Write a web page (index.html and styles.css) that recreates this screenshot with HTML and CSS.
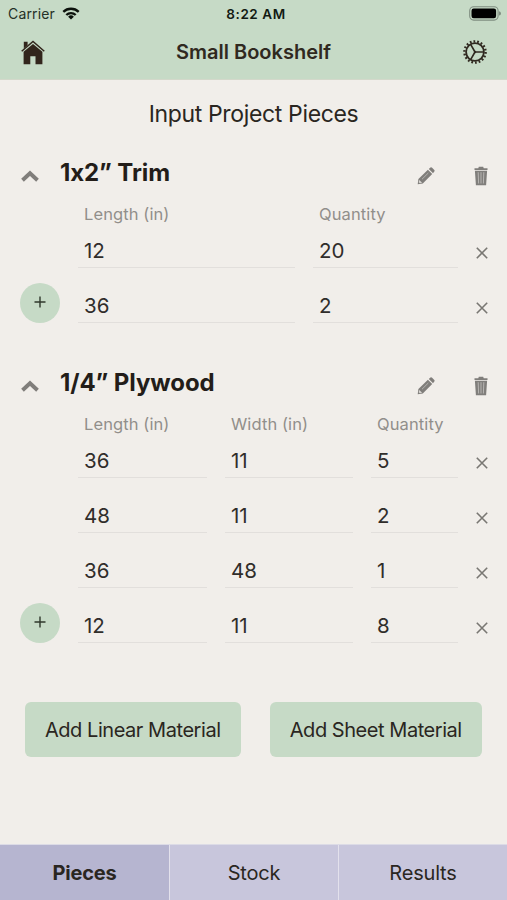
FILE: index.html
```html
<!DOCTYPE html>
<html lang="en">
<head>
<meta charset="utf-8">
<title>Small Bookshelf</title>
<link rel="stylesheet" href="styles.css">
</head>
<body>
<svg class="defs" aria-hidden="true">
  <symbol id="chevron" viewBox="0 0 18 12"><path d="M1.5 10.2 9 3.2l7.5 7" fill="none" stroke="currentColor" stroke-width="3.9"/></symbol>
  <symbol id="pencil" viewBox="0 0 18 18"><path d="M.7 17.3 1.4 12.1 10.9 2.8 15.2 7.1 5.8 16.5ZM11.8 2 13.4.6Q14.3-.1 15.1.7L17.3 2.9Q18 3.8 17.3 4.6L16 6.2Z" fill="currentColor"/><path d="M5 12.2 11.3 6" stroke="#c9c7c4" stroke-width=".7" fill="none"/><path d="m2.3 12.9 2.8 2.8-2.3.6-1.1-1.1Z" fill="#d8d5d2"/></symbol>
  <symbol id="trash" viewBox="0 0 14 20"><path d="M.5 2.2h3.8l.5-1.5h4.4l.5 1.5h3.8v1.9H.5ZM.9 4.7h12.2l-1 14.5H1.9Z" fill="currentColor"/><path d="m4.2 6.2.4 11.3M7 6.2v11.3m2.8-11.3-.4 11.3" stroke="#c4c2bf" stroke-width=".8" fill="none"/></symbol>
  <symbol id="cross" viewBox="0 0 12 12"><path d="m.8.8 10.4 10.4m0-10.4L.8 11.2" stroke="currentColor" stroke-width="1.6"/></symbol>
  <symbol id="plus" viewBox="0 0 12 12"><path d="M6 .5v11M.5 6h11" stroke="currentColor" stroke-width="1.4"/></symbol>
</svg>
<div class="app">
  <header class="top">
    <div class="status">
      <div class="carrier"><span>Carrier</span>
        <svg width="18" height="13" viewBox="0 0 18 13"><g fill="none" stroke="#0c110c" stroke-width="2.3"><path d="M1.3 4.9a11 11 0 0 1 15.4 0"/><path d="M4.3 8a6.7 6.7 0 0 1 9.4 0"/></g><path d="M9 12.6 6.1 9.8a4.1 4.1 0 0 1 5.8 0Z" fill="#0c110c"/></svg>
      </div>
      <div class="clock">8:22 AM</div>
      <svg class="battery" width="32" height="15" viewBox="0 0 32 15"><rect x=".7" y=".7" width="28.4" height="13.4" rx="4" fill="none" stroke="#7f8d80" stroke-width="1.1"/><rect x="2.5" y="2.5" width="24.6" height="9.8" rx="2.2" fill="#000"/><path d="M30 5.2q2 .5 2 2.2t-2 2.2Z" fill="#7f8d80"/></svg>
    </div>
    <nav class="bar">
      <svg width="24" height="25" viewBox="0 0 24 25"><path d="M2.8 1.8h3.8v3.5L2.8 8.4Z" fill="#32251c"/><path d="M.7 11.2 12 1.5l11.3 9.7" fill="none" stroke="#32251c" stroke-width="1.5"/><path d="M2.6 11.8 12 3.9l9.4 7.9V24.2h-6.9v-8H9.3v8H2.6Z" fill="#32251c"/></svg>
      <h1>Small Bookshelf</h1>
      <svg width="26" height="26" viewBox="-13 -13 26 26" fill="none" stroke="#302920"><circle r="8.9" stroke-width="1.8"/><circle r="10.6" stroke-width="2.4" stroke-dasharray="1.75 1.95"/><path d="M0 0h9M0 0l-4.5-7.8M0 0l-4.5 7.8" stroke-width="1.6"/><circle r="1.2" fill="#302920" stroke="none"/></svg>
    </nav>
  </header>
  <main>
    <h2>Input Project Pieces</h2>
    <section class="material">
      <div class="heading"><svg class="chev"><use href="#chevron"/></svg><h3>1x2” Trim</h3><svg class="pencil"><use href="#pencil"/></svg><svg class="trash"><use href="#trash"/></svg></div>
      <div class="row linear labels"><i></i><span>Length (in)</span><span>Quantity</span></div>
      <div class="row linear"><i></i><b>12</b><b>20</b><svg class="x"><use href="#cross"/></svg></div>
      <div class="row linear"><div class="add"><svg><use href="#plus"/></svg></div><b>36</b><b>2</b><svg class="x"><use href="#cross"/></svg></div>
    </section>
    <section class="material">
      <div class="heading"><svg class="chev"><use href="#chevron"/></svg><h3>1/4” Plywood</h3><svg class="pencil"><use href="#pencil"/></svg><svg class="trash"><use href="#trash"/></svg></div>
      <div class="row sheet labels"><i></i><span>Length (in)</span><span>Width (in)</span><span>Quantity</span></div>
      <div class="row sheet"><i></i><b>36</b><b>11</b><b>5</b><svg class="x"><use href="#cross"/></svg></div>
      <div class="row sheet"><i></i><b>48</b><b>11</b><b>2</b><svg class="x"><use href="#cross"/></svg></div>
      <div class="row sheet"><i></i><b>36</b><b>48</b><b>1</b><svg class="x"><use href="#cross"/></svg></div>
      <div class="row sheet"><div class="add"><svg><use href="#plus"/></svg></div><b>12</b><b>11</b><b>8</b><svg class="x"><use href="#cross"/></svg></div>
    </section>
    <div class="actions"><div class="btn first">Add Linear Material</div><div class="btn second">Add Sheet Material</div></div>
  </main>
  <footer class="tabs"><div class="tab active">Pieces</div><div class="tab">Stock</div><div class="tab">Results</div></footer>
</div>
</body>
</html>
```
FILE: styles.css
```css
* { box-sizing: border-box; }
body { margin: 0; font-family: Inter, "Liberation Sans", sans-serif; color: #2a2621; background: #f1eeea; }
h1, h2, h3 { margin: 0; white-space: nowrap; }
svg { display: block; flex: none; }
.defs { display: none; }
.app { width: 507px; height: 900px; display: flex; flex-direction: column; overflow: hidden; }
.top { height: 80px; background: #c6dac6; border-bottom: 1px solid #d3d8ca; }
.status { height: 27px; display: grid; grid-template-columns: 1fr auto 1fr; align-items: center; padding: 0 6px 0 8px; font-size: 14px; }
.carrier { display: flex; align-items: center; gap: 7px; color: #253027; letter-spacing: 0.15px; }
.clock { font-weight: 600; font-size: 13.5px; letter-spacing: 0.55px; color: #121a13; padding-left: 3px; }
.battery { justify-self: end; }
.bar { height: 50px; display: flex; align-items: center; justify-content: space-between; padding: 0 19px 0 21px; }
.bar h1 { font-size: 20px; font-weight: 600; letter-spacing: 0; color: #30291f; }
main { flex: 1; display: flex; flex-direction: column; }
h2 { height: 70px; line-height: 68px; text-align: center; font-size: 23px; font-weight: 400; letter-spacing: -0.35px; }
.material { margin-bottom: 37px; }
.heading { height: 50px; display: flex; padding-left: 21px; color: #807e7b; }
.heading h3 { flex: 1; margin-left: 21px; font-size: 24px; line-height: 46px; font-weight: 700; letter-spacing: -0.1px; color: #231d19; }
.chev { width: 18px; height: 12px; margin-top: 20px; }
.pencil { width: 18px; height: 18px; margin-top: 17px; }
.trash { width: 14px; height: 20px; margin: 16px 19px 0 39px; }
.row { display: grid; height: 40px; margin-bottom: 15px; padding-left: 20px; }
.row:last-child { margin-bottom: 0; }
.linear { grid-template-columns: 40px 217px 145px 12px; column-gap: 18px; }
.sheet { grid-template-columns: 40px 129px 128px 87px 12px; column-gap: 18px; }
.labels { height: 28px; margin: 0; font-size: 16.5px; line-height: 28px; letter-spacing: 0.1px; color: #918f8b; }
.labels span { padding-left: 6px; white-space: nowrap; }
.row b { font-weight: 400; font-size: 20.5px; line-height: 45px; padding-left: 6px; border-bottom: 1px solid #e2dfdc; color: #302d2a; height: 40px; }
.x { width: 12px; height: 12px; margin-top: 19px; color: #797773; }
.add { width: 40px; height: 40px; border-radius: 50%; background: #c6dac6; display: flex; justify-content: center; color: #30382c; }
.add svg { width: 12px; height: 12px; margin: 13px 1px 0 0; }
.actions { display: flex; gap: 29px; margin: 22px 25px 0; }
.btn { height: 55px; line-height: 57px; border-radius: 6px; background: #c6dac6; text-align: center; font-size: 20px; white-space: nowrap; letter-spacing: -0.45px; }
.first { width: 216px; }
.second { width: 213px; }
.tabs { height: 56px; display: grid; grid-template-columns: 169px 168px 168px; gap: 1px; background: #e3e1ec; border-top: 1px solid #dcdbe6; }
.tab { background: #c8c6dc; text-align: center; font-size: 20px; line-height: 57px; letter-spacing: -0.2px; }
.active { background: #b6b5d0; font-weight: 700; }
```
